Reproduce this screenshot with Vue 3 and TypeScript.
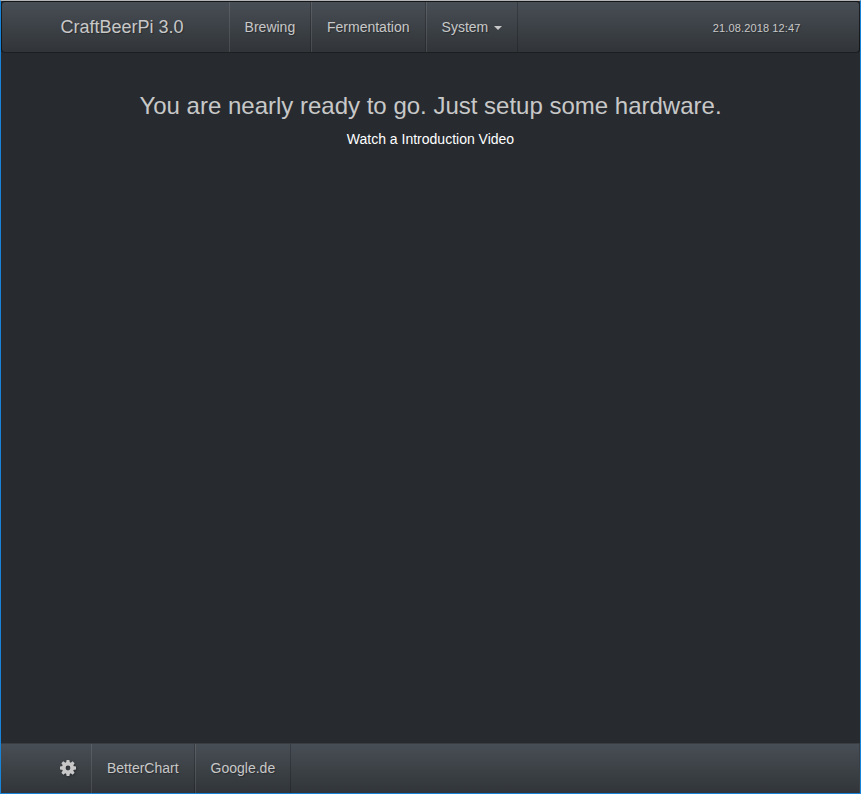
<script setup lang="ts">
interface MenuItem {
  label: string
  width: number
  dropdown?: boolean
}

const menu: MenuItem[] = [
  { label: 'Brewing', width: 82.4 },
  { label: 'Fermentation', width: 114.6 },
  { label: 'System', width: 92, dropdown: true },
]
const links: MenuItem[] = [
  { label: 'BetterChart', width: 103.6 },
  { label: 'Google.de', width: 96 },
]
const timestamp = '21.08.2018 12:47'
const teeth = [0, 45, 90, 135, 180, 225, 270, 315]
</script>

<template>
  <div class="window">
    <header class="bar top">
      <a class="brand">CraftBeerPi 3.0</a>
      <nav class="menu">
        <a v-for="item in menu" :key="item.label" class="item" :style="{ width: item.width + 'px' }">
          {{ item.label }}<span v-if="item.dropdown" class="caret"></span>
        </a>
      </nav>
      <span class="clock">{{ timestamp }}</span>
    </header>
    <main class="content">
      <h3>You are nearly ready to go. Just setup some hardware.</h3>
      <a class="video">Watch a Introduction Video</a>
    </main>
    <footer class="bar bottom">
      <a class="settings">
        <svg width="16" height="16" viewBox="0 0 16 16">
          <g fill="#c8c8c8">
            <path v-for="a in teeth" :key="a" d="M6 3.2 L6.6 0 H9.4 L10 3.2Z" :transform="`rotate(${a} 8 8)`" />
          </g>
          <circle cx="8" cy="8" r="4.2" fill="none" stroke="#c8c8c8" stroke-width="3.6" />
        </svg>
      </a>
      <nav class="menu">
        <a v-for="item in links" :key="item.label" class="item" :style="{ width: item.width + 'px' }">{{ item.label }}</a>
      </nav>
    </footer>
  </div>
</template>

<style>
body {
  margin: 0;
  background: #272b30;
}
</style>

<style scoped>
.window {
  box-sizing: border-box;
  height: 794px;
  display: flex;
  flex-direction: column;
  border: 1px solid #1883d7;
  border-top-color: #b2b4b7;
  background: #272b30;
  color: #c8c8c8;
  font: 14px/20px "Liberation Sans", Arial, sans-serif;
}
.bar {
  box-sizing: border-box;
  display: flex;
  flex: none;
  background: linear-gradient(#484e55, #3a3f44 60%, #313539);
  text-shadow: 1px 1px 1px rgba(0, 0, 0, 0.3);
}
.top {
  height: 52px;
  border: 1px solid rgba(0, 0, 0, 0.6);
  border-radius: 4px;
  padding-left: 58.5px;
}
.brand {
  width: 168.5px;
  padding-top: 15px;
  font-size: 18px;
}
.menu {
  display: flex;
}
.item {
  box-sizing: border-box;
  padding: 15px 0 0 14.6px;
  white-space: nowrap;
  border-left: 1px solid rgba(255, 255, 255, 0.1);
  border-right: 1px solid rgba(0, 0, 0, 0.2);
}
.caret {
  display: inline-block;
  margin-left: 5.4px;
  vertical-align: middle;
  border-top: 4px solid #c8c8c8;
  border-left: 4px solid transparent;
  border-right: 4px solid transparent;
}
.clock {
  margin: 16px 58.5px 0 auto;
  font-size: 11px;
  letter-spacing: 0.13px;
}
.content {
  flex: 1;
  padding-top: 40px;
  text-align: center;
}
h3 {
  margin: 0 0 10px;
  font-size: 24px;
  font-weight: 400;
  line-height: 26px;
}
.video {
  display: block;
  color: #fff;
}
.bottom {
  height: 50px;
  border-top: 1px solid #3a3e42;
  border-right: 1px solid #3a3e42;
}
.bottom .item {
  padding-top: 14px;
}
.settings {
  width: 90.4px;
  box-sizing: border-box;
  padding: 15.5px 0 0 59px;
}
.settings svg {
  display: block;
  filter: drop-shadow(1px 1px 1px rgba(0, 0, 0, 0.3));
}
</style>
